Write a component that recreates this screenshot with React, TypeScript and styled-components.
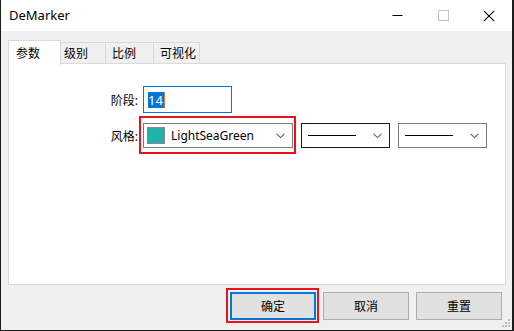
import React from "react";
import styled, { createGlobalStyle } from "styled-components";

const Global = createGlobalStyle`
  html, body { margin: 0; padding: 0; background: #1c1c1c; }
  body { width: 514px; height: 331px; overflow: hidden; }
  * { box-sizing: border-box; }
`;

const FONT = `"Noto Sans", "Noto Sans CJK SC", sans-serif`;

const Window = styled.div`
  margin-left: 1px;
  width: 511px;
  height: 330px;
  background: #f0f0f0;
  display: flex;
  flex-direction: column;
  font-family: ${FONT};
  color: #000;
`;

const TitleBar = styled.div`
  height: 31px;
  background: #fff;
  display: flex;
  align-items: center;
  padding-left: 8px;
`;

const Title = styled.div`
  flex: 1;
  font-size: 13px;
  line-height: 31px;
  padding-bottom: 1px;
`;

const CapBtn = styled.div`
  width: 46px;
  height: 31px;
  display: flex;
  align-items: center;
  justify-content: center;
`;

const Body = styled.div`
  flex: 1;
  display: flex;
  flex-direction: column;
  padding: 9px 0 0 7px;
  position: relative;
`;

const TabRow = styled.div`
  display: flex;
  align-items: flex-end;
  height: 24px;
  position: relative;
  z-index: 2;
`;

const Tab = styled.div<{ $w: number; $pl: number; $active?: boolean }>`
  width: ${(p) => p.$w}px;
  height: ${(p) => (p.$active ? 25 : 22)}px;
  margin-left: ${(p) => (p.$active ? 0 : -1)}px;
  margin-bottom: ${(p) => (p.$active ? -1 : 0)}px;
  padding-left: ${(p) => p.$pl}px;
  padding-bottom: ${(p) => (p.$active ? 1 : 0)}px;
  background: ${(p) => (p.$active ? "#fff" : "#f0f0f0")};
  border: 1px solid #d9d9d9;
  border-bottom: ${(p) => (p.$active ? "none" : "1px solid #d9d9d9")};
  font-size: 12px;
  display: flex;
  align-items: center;
  position: relative;
  z-index: ${(p) => (p.$active ? 3 : 1)};
`;

const Panel = styled.div`
  width: 498px;
  height: 222px;
  background: #fff;
  border: 1px solid #d9d9d9;
  margin-top: -1px;
  position: relative;
  z-index: 1;
  padding: 22px 0 0 0;
  display: grid;
  grid-template-columns: 129px auto;
  column-gap: 5px;
  row-gap: 10px;
  align-content: start;
  align-items: center;
`;

const Label = styled.div`
  font-size: 12px;
  text-align: right;
  color: #000;
`;

const Controls = styled.div`
  display: flex;
  align-items: center;
  gap: 8px;
`;

const Input = styled.div`
  width: 89px;
  height: 27px;
  border: 1px solid #0078d7;
  background: #fff;
  display: flex;
  align-items: center;
  padding-left: 4px;
`;

const Selected = styled.span`
  background: #0078d7;
  color: #fff;
  font-size: 13px;
  line-height: 16px;
  height: 16px;
  padding: 0 1px 0 0;
  border-right: 1px solid #e8703a;
`;

const Combo = styled.div<{ $w: number; $dark?: boolean }>`
  position: relative;
  width: ${(p) => p.$w}px;
  height: 25px;
  border: 1px solid ${(p) => (p.$dark ? "#1a1a1a" : "#7a7a7a")};
  background: #fff;
  display: flex;
  align-items: center;
  padding: 0 7px 0 3px;
  gap: 6px;
`;

const Swatch = styled.div<{ $c: string }>`
  width: 18px;
  height: 17px;
  border: 1px solid #8a8a8a;
  background: ${(p) => p.$c};
  flex: none;
`;

const ComboText = styled.div`
  flex: 1;
  font-size: 12px;
  white-space: nowrap;
`;

const LineSample = styled.div`
  flex: 1;
  height: 1px;
  background: #000;
  margin: 0 11px 0 3px;
`;

const Highlight = styled.div<{ $t: number; $r: number; $b: number; $l: number }>`
  position: absolute;
  top: ${(p) => -p.$t}px;
  right: ${(p) => -p.$r}px;
  bottom: ${(p) => -p.$b}px;
  left: ${(p) => -p.$l}px;
  border: 2px solid #e8121c;
  pointer-events: none;
`;

const ButtonRow = styled.div`
  display: flex;
  justify-content: flex-end;
  gap: 7px;
  padding: 7px 10px 0 0;
`;

const Button = styled.div<{ $primary?: boolean }>`
  position: relative;
  width: 86px;
  height: 28px;
  background: #e1e1e1;
  border: ${(p) => (p.$primary ? "2px solid #0078d7" : "1px solid #adadad")};
  font-size: 12px;
  display: flex;
  align-items: center;
  justify-content: center;
`;

const Grip = styled.svg`
  position: absolute;
  right: 1px;
  bottom: 2px;
`;

const Chevron = () => (
  <svg width="9" height="6" viewBox="0 0 9 6" style={{ flex: "none" }}>
    <polyline points="0.5,0.8 4.5,4.6 8.5,0.8" fill="none" stroke="#606060" strokeWidth="1.1" />
  </svg>
);

export default function App() {
  return (
    <>
      <Global />
      <Window>
        <TitleBar>
          <Title>DeMarker</Title>
          <CapBtn>
            <svg width="11" height="11" viewBox="0 0 11 11">
              <line x1="0.5" y1="5.5" x2="10.5" y2="5.5" stroke="#000" strokeWidth="1" />
            </svg>
          </CapBtn>
          <CapBtn>
            <svg width="11" height="11" viewBox="0 0 11 11">
              <rect x="0.5" y="0.5" width="10" height="10" fill="none" stroke="#c4c4c4" strokeWidth="1" />
            </svg>
          </CapBtn>
          <CapBtn>
            <svg width="12" height="12" viewBox="0 0 12 12">
              <line x1="0.8" y1="0.8" x2="11.2" y2="11.2" stroke="#000" strokeWidth="1.1" />
              <line x1="11.2" y1="0.8" x2="0.8" y2="11.2" stroke="#000" strokeWidth="1.1" />
            </svg>
          </CapBtn>
        </TitleBar>
        <Body>
          <TabRow>
            <Tab $w={53} $pl={7} $active>参数</Tab>
            <Tab $w={46} $pl={3}>级别</Tab>
            <Tab $w={49} $pl={6}>比例</Tab>
            <Tab $w={47} $pl={6}>可视化</Tab>
          </TabRow>
          <Panel>
            <Label>阶段:</Label>
            <Controls>
              <Input>
                <Selected>14</Selected>
              </Input>
            </Controls>
            <Label>风格:</Label>
            <Controls>
              <Combo $w={150}>
                <Swatch $c="#20b2aa" />
                <ComboText>LightSeaGreen</ComboText>
                <Chevron />
                <Highlight $t={8} $r={4} $b={7} $l={5} />
              </Combo>
              <Combo $w={89} $dark>
                <LineSample />
                <Chevron />
              </Combo>
              <Combo $w={89}>
                <LineSample />
                <Chevron />
              </Combo>
            </Controls>
          </Panel>
          <ButtonRow>
            <Button $primary>
              确定
              <Highlight $t={6} $r={5} $b={5} $l={6} />
            </Button>
            <Button>取消</Button>
            <Button>重置</Button>
          </ButtonRow>
          <Grip width="9" height="9" viewBox="0 0 9 9">
            <rect x="6" y="0" width="2" height="2" fill="#bdbdbd" />
            <rect x="3" y="3" width="2" height="2" fill="#bdbdbd" />
            <rect x="6" y="3" width="2" height="2" fill="#bdbdbd" />
            <rect x="0" y="6" width="2" height="2" fill="#bdbdbd" />
            <rect x="3" y="6" width="2" height="2" fill="#bdbdbd" />
            <rect x="6" y="6" width="2" height="2" fill="#bdbdbd" />
          </Grip>
        </Body>
      </Window>
    </>
  );
}
